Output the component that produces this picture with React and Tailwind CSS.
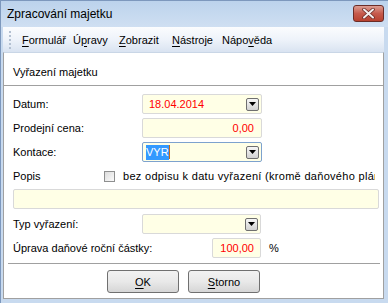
import React from 'react';

const DropBtn = () => (
  <span className="w-[13px] h-[13px] mr-[2px] flex items-center justify-center rounded-[2px] border border-[#6f6f6f] bg-gradient-to-b from-[#f7f7f7] to-[#d2d2d2]">
    <svg width="7" height="4" viewBox="0 0 7 4">
      <path d="M0 0h7L3.5 4z" fill="#000" />
    </svg>
  </span>
);

const Field = ({ children, drop, blue, className = '' }) => (
  <div
    className={`h-[20px] flex items-center rounded-[2px] border bg-[#ffffe6] ${
      blue ? 'border-[#7da2ce]' : 'border-[#d9d9d9]'
    } ${className}`}
  >
    <div className="flex-1 flex items-center min-w-0 h-full">{children}</div>
    {drop && <DropBtn />}
  </div>
);

const Row = ({ label, children, className = '', labelW = 'w-[129px]' }) => (
  <div className={`flex items-center h-[20px] ${className}`}>
    <span className={`${labelW} whitespace-nowrap`}>{label}</span>
    {children}
  </div>
);

const U = ({ children }) => <span className="underline underline-offset-[2px]">{children}</span>;

export default function App() {
  const menu = [
    { w: 'w-[51px]', el: <><U>F</U>ormulář</> },
    { w: 'w-[46px]', el: <>Ú<U>p</U>ravy</> },
    { w: 'w-[53px]', el: <><U>Z</U>obrazit</> },
    { w: 'w-[50px]', el: <><U>N</U>ástroje</> },
    { w: 'w-[60px]', el: <>Nápo<U>v</U>ěda</> },
  ];

  return (
    <div className="w-[388px] h-[303px] overflow-hidden flex flex-col bg-[#c8daef] border-t border-l border-[#7d98bd] text-[11px] leading-[14px] text-black font-['Liberation_Sans',Arial,sans-serif]">
      {/* title bar */}
      <div className="h-[26px] flex items-start bg-gradient-to-b from-[#bcd3ec] to-[#cfdff2]">
        <span className="flex-1 pl-[6px] pt-[6px] text-[12px] leading-[15px]">Zpracování majetku</span>
        <span className="mt-[4px] mr-[4px] w-[31px] h-[17px] flex items-center justify-center rounded-[3px] border border-[#6b2c27] bg-gradient-to-b from-[#dc9d92] via-[#c65a4c] to-[#b8412f]">
          <svg width="13" height="11" viewBox="0 0 13 11">
            <path d="M2 1.5l9 8M11 1.5l-9 8" stroke="#6a2a24" strokeWidth="3.6" strokeLinecap="round" />
            <path d="M2 1.5l9 8M11 1.5l-9 8" stroke="#f4eeee" strokeWidth="2" strokeLinecap="round" />
          </svg>
        </span>
      </div>

      {/* menu bar */}
      <div className="h-[25px] ml-[2px] mr-[4px] flex items-center bg-gradient-to-b from-[#fbfcfe] via-[#eef3fa] to-[#d9e3f1]">
        <span className="ml-[6px] w-[2px] h-[18px] border-l-2 border-dotted border-[#b3c0d1]" />
        <div className="flex ml-[11px]">
          {menu.map((m, i) => (
            <span key={i} className={m.w}>
              {m.el}
            </span>
          ))}
        </div>
      </div>

      {/* content */}
      <div className="flex-1 ml-[2px] mr-[4px] mb-[4px] flex flex-col bg-white border border-[#a0a0a0] border-t-[#c9d6e6]">
        <div className="h-[33px] pt-[12px] pl-[9px] border-b border-[#a0a0a0]">Vyřazení majetku</div>

        <div className="pl-[9px] flex flex-col">
          <Row label="Datum:" className="mt-[8px]">
            <Field drop className="w-[120px]">
              <span className="pl-[6px] text-[#ff0000]">18.04.2014</span>
            </Field>
          </Row>
          <Row label="Prodejní cena:" className="mt-[4px]">
            <Field className="w-[120px]">
              <span className="flex-1 text-right pr-[7px] text-[#ff0000]">0,00</span>
            </Field>
          </Row>
          <Row label="Kontace:" className="mt-[4px]">
            <Field drop blue className="w-[120px]">
              <span className="ml-[3px] bg-[#3399ff] text-white leading-[15px]">VYR</span>
              <span className="w-[1px] h-[14px] bg-[#c46a1a]" />
            </Field>
          </Row>
          <div className="mt-[4px] h-[20px] flex items-center">
            <span className="w-[91px]">Popis</span>
            <span className="w-[11px] h-[11px] border border-[#8e8f8f] bg-gradient-to-br from-[#dcdcdc] to-[#fbfbfb]" />
            <span className="ml-[8px] w-[252px] overflow-hidden whitespace-nowrap tracking-[0.3px]">
              bez odpisu k datu vyřazení (kromě daňového plánu)
            </span>
          </div>
          <Field className="mt-[3px] mr-[6px] w-[366px]" />
          <Row label="Typ vyřazení:" className="mt-[5px]">
            <Field drop className="w-[119px]" />
          </Row>
          <Row label="Úprava daňové roční částky:" labelW="w-[199px]" className="mt-[4px]">
            <Field className="w-[49px]">
              <span className="flex-1 text-right pr-[6px] text-[#ff0000]">100,00</span>
            </Field>
            <span className="ml-[8px]">%</span>
          </Row>
        </div>

        <div className="mt-[5px] ml-[4px] mr-[3px] h-[1px] bg-[#a0a0a0]" />

        <div className="mt-[6px] flex gap-[9px] pl-[103px]">
          {[
            <><U>O</U>K</>,
            <><U>S</U>torno</>,
          ].map((t, i) => (
            <button
              key={i}
              className="w-[72px] h-[23px] rounded-[3px] border border-[#707070] bg-gradient-to-b from-[#f2f2f2] via-[#e9e9e9] to-[#d6d6d6] flex items-center justify-center"
            >
              {t}
            </button>
          ))}
        </div>
      </div>
    </div>
  );
}
